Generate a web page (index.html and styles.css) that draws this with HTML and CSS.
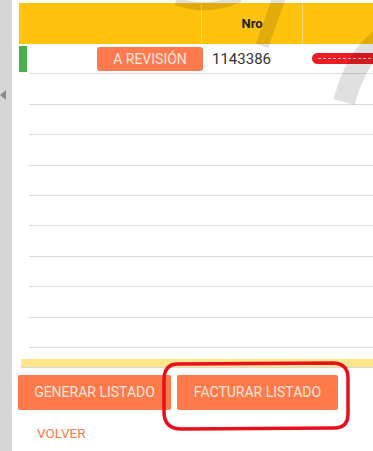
FILE: index.html
```html
<!DOCTYPE html>
<html lang="es">
<head>
  <meta charset="UTF-8">
  <title>Listado</title>
  <link rel="stylesheet" href="styles.css">
</head>
<body>

<div class="page">
  <div class="side">
    <span class="side-arrow"></span>
  </div>

  <div class="main">
    <div class="grid-head">
      <div class="col col-state"></div>
      <div class="col col-nro">Nro</div>
      <div class="col col-extra"></div>
    </div>

    <div class="grid-body">
      <div class="row">
        <span class="flag"></span>
        <div class="cell cell-state"><span class="badge">A REVISIÓN</span></div>
        <div class="cell cell-nro">1143386</div>
        <div class="cell cell-extra"><span class="scribble"></span></div>
      </div>
      <div class="row"></div>
      <div class="row"></div>
      <div class="row"></div>
      <div class="row"></div>
      <div class="row"></div>
      <div class="row"></div>
      <div class="row"></div>
      <div class="row"></div>
      <div class="row"></div>
    </div>

    <div class="grid-foot"></div>

    <div class="actions">
      <button class="btn btn-gen">GENERAR LISTADO</button>
      <button class="btn btn-fact">FACTURAR LISTADO</button>
    </div>

    <a class="back">VOLVER</a>
  </div>
</div>

<!-- watermark + red marker drawn over the screenshot -->
<svg class="overlay" width="373" height="451" viewBox="0 0 373 451">
  <g fill="none" stroke="rgba(0,0,0,0.12)" stroke-linecap="butt">
    <path d="M176 1 Q206 13 240 -2" stroke-width="8"/>
    <path d="M279 -2 L262 46" stroke-width="13"/>
    <path d="M380 40 Q356 58 344 102" stroke-width="22"/>
  </g>
  <path d="M178 364 L334 363 Q348 364 348 378 L348 414 Q348 428 334 428 L180 429 Q164 428 164 412 L164 380 Q164 364 178 364 Z" fill="none" stroke="#e8101c" stroke-width="3.5"/>
</svg>

</body>
</html>
```

FILE: styles.css
```css
body {
  margin: 0;
  background: #fff;
  font-family: Roboto, "Liberation Sans", sans-serif;
  overflow: hidden;
}

.page {
  display: flex;
  min-height: 451px;
}

/* Left collapsed panel */
.side {
  width: 12px;
  flex-shrink: 0;
  background: #d6d6d6;
  position: relative;
}

.side-arrow {
  position: absolute;
  left: 0;
  top: 90px;
  border-top: 5px solid transparent;
  border-bottom: 5px solid transparent;
  border-right: 6px solid #8a8a8a;
}

.main {
  flex: 1;
  min-width: 0;
  padding-left: 7px;
  padding-top: 3px;
}

/* Table header */
.grid-head {
  display: flex;
  height: 41px;
  background: #ffc30d;
}

.col {
  display: flex;
  align-items: center;
  justify-content: center;
  font-size: 13px;
  font-weight: bold;
  color: #222;
}

.col-state {
  width: 182px;
  border-right: 1px solid #f6d67c;
}

.col-nro {
  width: 100px;
  border-right: 1px solid #f6d67c;
}

.col-extra {
  flex: 1;
}

/* Table body */
.grid-body {
  margin-left: 10px;
}

.row {
  display: flex;
  align-items: center;
  height: 30.4px;
  box-sizing: border-box;
  border-bottom: 1px solid #dcdcdc;
}

.flag {
  width: 8px;
  height: 26px;
  margin-left: -10px;
  margin-right: 2px;
  background: #4caf50;
  flex-shrink: 0;
}

.cell-state {
  width: 174px;
  display: flex;
  justify-content: flex-end;
}

.badge {
  display: inline-block;
  width: 106px;
  height: 24px;
  line-height: 24px;
  text-align: center;
  background: #ff7a4f;
  color: #ffe6da;
  font-size: 14px;
  border-radius: 3px;
}

.cell-nro {
  width: 90px;
  padding-left: 9px;
  font-size: 15px;
  color: #333;
}

.cell-extra {
  flex: 1;
  padding-left: 10px;
}

.scribble {
  display: block;
  height: 11px;
  margin-right: -8px;
  background: #ee1c25;
  border-radius: 6px;
  position: relative;
}

.scribble::after {
  content: "";
  position: absolute;
  left: 6px;
  right: 10px;
  top: 5px;
  border-top: 1px dashed #f3c8c8;
}

.grid-foot {
  height: 8px;
  margin: 11px 0 0 2px;
  background: #ffe68c;
  border-bottom: 1px solid #d8d8d8;
}

/* Buttons */
.actions {
  display: flex;
  gap: 6px;
  margin: 7px 0 0 -1px;
}

.btn {
  height: 35px;
  border: none;
  border-radius: 2px;
  background: #ff7a4a;
  color: #ffe6da;
  font-family: Roboto, "Liberation Sans", sans-serif;
  font-size: 14px;
  padding: 0;
}

.btn-gen {
  width: 153px;
}

.btn-fact {
  width: 161px;
}

.back {
  display: inline-block;
  margin: 15px 0 0 18px;
  font-size: 13.5px;
  line-height: 16px;
  color: #ff7a45;
}

.overlay {
  position: absolute;
  left: 0;
  top: 0;
  pointer-events: none;
}
```
